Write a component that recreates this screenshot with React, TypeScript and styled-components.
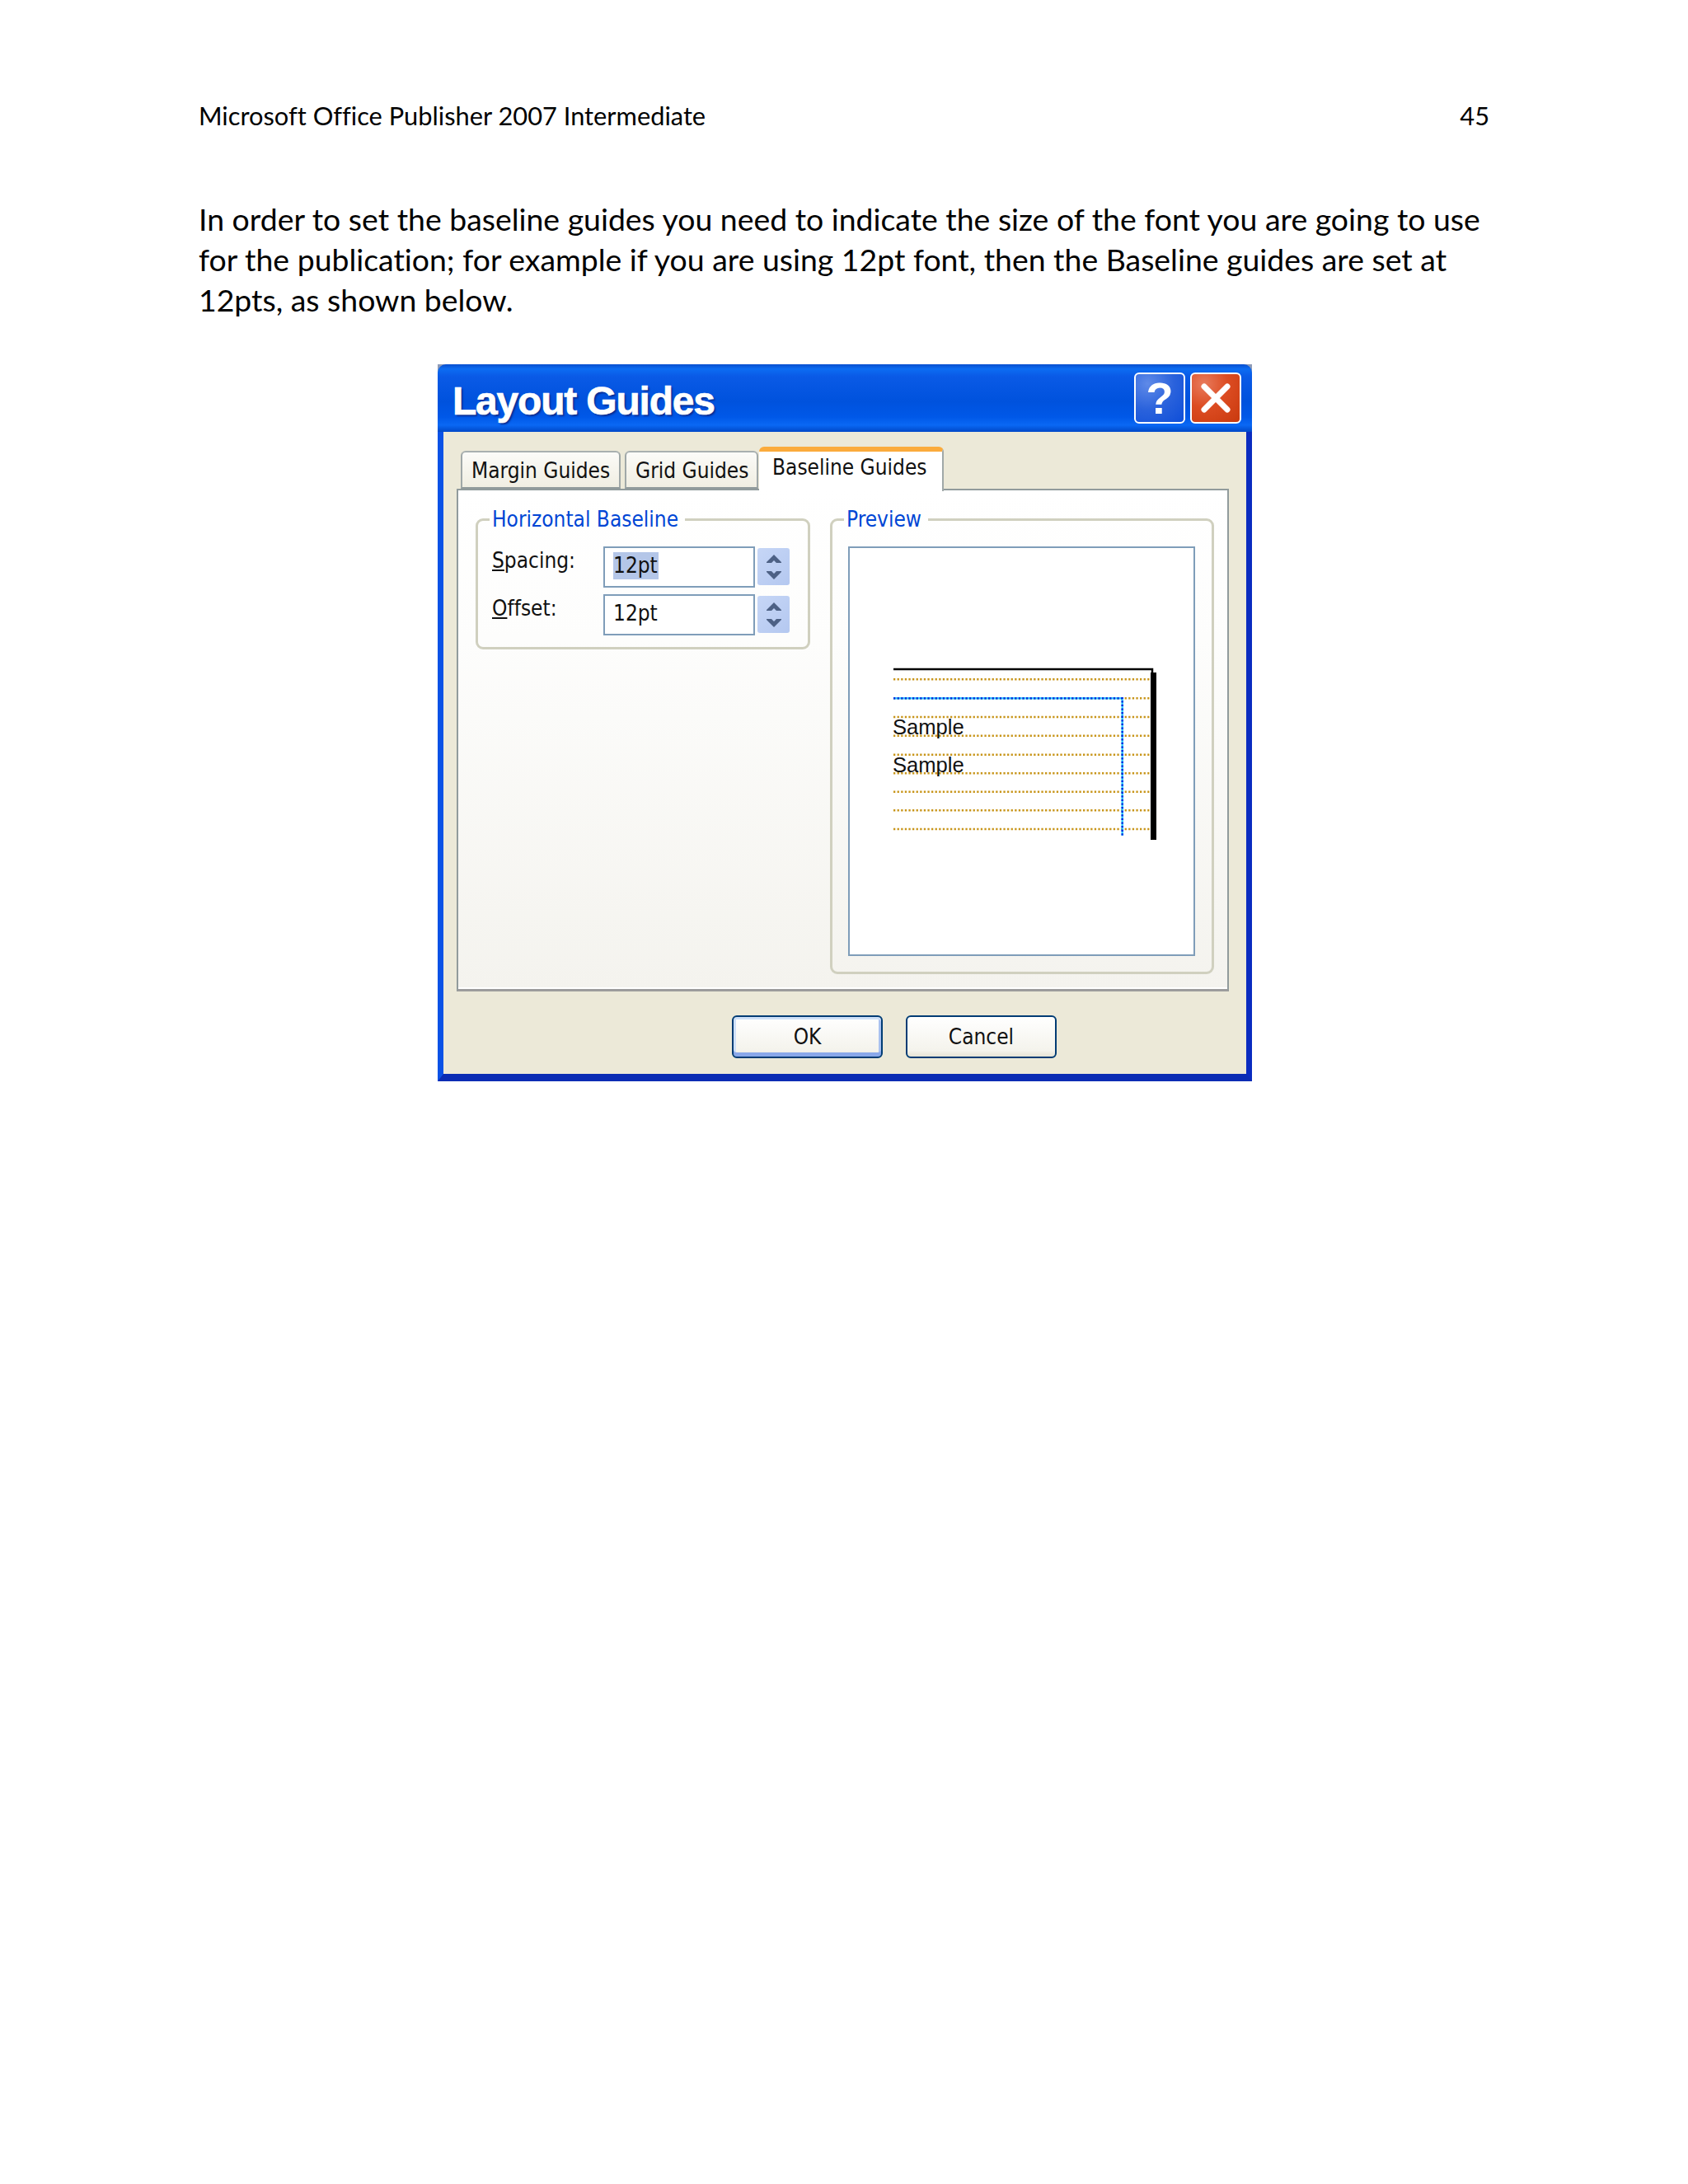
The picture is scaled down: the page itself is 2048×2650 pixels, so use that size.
import * as React from "react";
import styled, { createGlobalStyle } from "styled-components";

const GlobalStyle = createGlobalStyle`
  html, body {
    margin: 0;
    padding: 0;
    background: #fff;
  }
`;

const SPage = styled.div`
  box-sizing: border-box;
  width: 2048px;
  height: 2650px;
  padding: 119px 241px 0 241px;
  font-family: Lato, "Open Sans", sans-serif;
  font-variant-ligatures: none;
  color: #000;
  background: #fff;
`;
const SHeader = styled.div`
  display: flex;
  justify-content: space-between;
  font-size: 30.8px;
  line-height: 44px;
`;
const SParagraph = styled.p`
  margin: 78px 0 0;
  font-size: 37.4px;
  line-height: 49px;
  white-space: nowrap;
`;

const SDialog = styled.div`
  box-sizing: border-box;
  width: 988px;
  height: 870px;
  margin: 54px 0 0 290px;
  display: flex;
  flex-direction: column;
  background: #8e9bb8;
  font-family: "DejaVu Sans Condensed", "DejaVu Sans", sans-serif;
  font-stretch: condensed;
  font-size: 26px;
  color: #111;
`;
const STitleBar = styled.div`
  flex: 0 0 82px;
  box-sizing: border-box;
  display: flex;
  align-items: center;
  padding: 0 13px 0 18px;
  border-radius: 10px 10px 0 0;
  background: linear-gradient(
    180deg,
    #0a4fcf 0%,
    #0c6cf2 7%,
    #0a5ae6 18%,
    #0052dd 55%,
    #0058e8 78%,
    #0a68f4 90%,
    #0048c8 100%
  );
`;
const STitle = styled.div`
  flex: 1;
  padding-top: 6px;
  font-family: "Liberation Sans", sans-serif;
  font-stretch: normal;
  font-weight: 700;
  font-size: 48px;
  letter-spacing: -1.2px;
  color: #fff;
  -webkit-text-stroke: 0.7px #fff;
  text-shadow: 2px 2px 2px #0a2c90;
`;
const SCaptionButton = styled.div<{ $close?: boolean }>`
  box-sizing: border-box;
  width: 62px;
  height: 62px;
  margin-left: 6px;
  display: flex;
  align-items: center;
  justify-content: center;
  border: 2px solid #fff;
  border-radius: 6px;
  font-family: "Liberation Sans", sans-serif;
  font-stretch: normal;
  font-weight: 700;
  font-size: 54px;
  color: #fff;
  background: ${(p) =>
    p.$close
      ? "radial-gradient(circle at 25% 20%, #e87a5c 0%, #dc4c22 45%, #c9390e 100%)"
      : "radial-gradient(circle at 25% 20%, #5f8ae8 0%, #2a62dc 50%, #0e4ed8 100%)"};
`;
const SClient = styled.div`
  flex: 1;
  min-height: 0;
  box-sizing: border-box;
  padding: 18px 21px 0 16px;
  background: #ece9d8;
  border-left: 7px solid #0a52e6;
  border-right: 7px solid #0a2cc0;
  border-bottom: 9px solid #0a2cb4;
`;
const STabs = styled.div`
  display: flex;
  align-items: flex-end;
  height: 51px;
  padding-left: 5px;
`;
const STab = styled.div<{ $active?: boolean; $width: number }>`
  box-sizing: border-box;
  position: relative;
  z-index: ${(p) => (p.$active ? 1 : 0)};
  width: ${(p) => p.$width}px;
  height: ${(p) => (p.$active ? 54 : 46)}px;
  margin-right: ${(p) => (p.$active ? 0 : 5)}px;
  margin-bottom: ${(p) => (p.$active ? -3 : 0)}px;
  margin-left: ${(p) => (p.$active ? -4 : 0)}px;
  padding-left: ${(p) => (p.$active ? 16 : 11)}px;
  border: 2px solid #a0a8a8;
  border-bottom: ${(p) => (p.$active ? "none" : "2px solid #919b9c")};
  border-left: ${(p) => (p.$active ? "none" : "2px solid #a0a8a8")};
  border-top: ${(p) => (p.$active ? "6px solid #fbab3c" : "2px solid #a8b0b0")};
  border-radius: 6px 6px 0 0;
  line-height: ${(p) => (p.$active ? 38 : 45)}px;
  white-space: nowrap;
  background: ${(p) =>
    p.$active ? "#fff" : "linear-gradient(180deg, #fbfbf8 0%, #f0eee2 100%)"};
`;
const SPanel = styled.div`
  box-sizing: border-box;
  display: grid;
  grid-template-columns: 406px 466px;
  column-gap: 24px;
  align-items: start;
  height: 610px;
  padding: 20px 16px 0 21px;
  border: 2px solid #919b9c;
  border-bottom: 3px solid #9c9c9c;
  background: linear-gradient(180deg, #ffffff 0%, #fdfdfc 30%, #f4f3ee 100%);
  box-shadow: inset 0 -2px 0 #fff;
`;
const SGroup = styled.fieldset`
  box-sizing: border-box;
  min-width: 0;
  margin: 0;
  padding: 18px 0 14px 17px;
  border: 3px solid #d0d0bf;
  border-radius: 9px;
`;
const SLegend = styled.legend`
  margin-left: -3px;
  padding: 0 8px 0 3px;
  color: #0046d5;
  line-height: 30px;
`;
const SFieldRow = styled.div`
  display: flex;
  align-items: flex-start;
  & + & {
    margin-top: 8px;
  }
`;
const SLabel = styled.label`
  width: 135px;
  line-height: 34px;
`;
const SInput = styled.div`
  box-sizing: border-box;
  width: 184px;
  height: 50px;
  padding: 5px 0 0 10px;
  border: 2px solid #7f9db9;
  background: #fff;
  line-height: 33px;
`;
const SSelected = styled.span<{ $on?: boolean }>`
  display: inline-block;
  padding-right: 1px;
  background: ${(p) => (p.$on ? "#b4c6e8" : "transparent")};
`;
const SSpin = styled.div`
  width: 39px;
  height: 45px;
  margin: 2px 0 0 3px;
  display: flex;
  align-items: center;
  justify-content: center;
  border-radius: 3px;
  background: linear-gradient(135deg, #c6d6f6 0%, #b4c8f0 100%);
`;
const SPreviewBox = styled.div`
  box-sizing: border-box;
  width: 421px;
  height: 497px;
  margin: 0 0 5px 2px;
  border: 2px solid #7f9db9;
  background: #fff;
`;
const SFooter = styled.div`
  display: flex;
  gap: 28px;
  margin-top: 29px;
  padding-left: 334px;
`;
const SButton = styled.div<{ $default?: boolean }>`
  box-sizing: border-box;
  width: 183px;
  height: 52px;
  display: flex;
  align-items: center;
  justify-content: center;
  border: 2px solid #003c74;
  border-radius: 6px;
  background: linear-gradient(180deg, #fff 0%, #f4f3ec 85%, #e6e2d4 100%);
  box-shadow: ${(p) =>
    p.$default ? "inset 0 3px 0 #cee0f8, inset 0 -5px 0 #8aa8ea, inset 3px 0 0 #cfe0f8, inset -3px 0 0 #aac2f0" : "none"};
`;

const SpinArrows = () => (
  <svg width="20" height="36" viewBox="0 0 20 36">
    <path d="M1 12 L10 3 L19 12 L19 13 L13 13 L10 10 L7 13 L1 13 Z" fill="#4d6185" />
    <path d="M1 24 L10 33 L19 24 L19 23 L13 23 L10 26 L7 23 L1 23 Z" fill="#4d6185" />
  </svg>
);

const baselines = [159.3, 182.3, 205, 227.7, 250.7, 273.3, 295.7, 318.3, 341];

const PreviewDrawing = () => (
  <svg width="417" height="493" viewBox="0 0 417 493">
    {baselines.map((y) => (
      <line
        key={y}
        x1="53"
        x2="366"
        y1={y}
        y2={y}
        stroke="#c8951a"
        strokeWidth="2.5"
        strokeDasharray="2.3 2.3"
      />
    ))}
    <path d="M53 147 H367 V152" stroke="#000" strokeWidth="2.5" fill="none" />
    <rect x="365" y="151" width="7" height="203" fill="#000" />
    <path d="M53 182.3 H330.7 V349" stroke="#39d0ff" strokeWidth="2.5" fill="none" />
    <path
      d="M53 182.3 H330.7 V349"
      stroke="#0030e0"
      strokeWidth="2.5"
      fill="none"
      strokeDasharray="2.3 2.3"
    />
    <text x="52" y="225.7" fontFamily="Liberation Sans" fontSize="25.6" fill="#111">
      Sample
    </text>
    <text x="52" y="271.7" fontFamily="Liberation Sans" fontSize="25.6" fill="#111">
      Sample
    </text>
  </svg>
);

const App = () => (
  <SPage>
    <GlobalStyle />
    <SHeader>
      <span>Microsoft Office Publisher 2007 Intermediate</span>
      <span>45</span>
    </SHeader>
    <SParagraph>
      In order to set the baseline guides you need to indicate the size of the font you are going to use
      <br />
      for the publication; for example if you are using 12pt font, then the Baseline guides are set at
      <br />
      12pts, as shown below.
    </SParagraph>
    <SDialog>
      <STitleBar>
        <STitle>Layout Guides</STitle>
        <SCaptionButton>?</SCaptionButton>
        <SCaptionButton $close>
          <svg width="40" height="40" viewBox="0 0 40 40">
            <path d="M6 6 L34 34 M34 6 L6 34" stroke="#fff" strokeWidth="7" strokeLinecap="round" />
          </svg>
        </SCaptionButton>
      </STitleBar>
      <SClient>
        <STabs>
          <STab $width={194}>Margin Guides</STab>
          <STab $width={162}>Grid Guides</STab>
          <STab $active $width={224}>Baseline Guides</STab>
        </STabs>
        <SPanel>
          <SGroup>
            <SLegend>Horizontal Baseline</SLegend>
            <SFieldRow>
              <SLabel><u>S</u>pacing:</SLabel>
              <SInput><SSelected $on>12pt</SSelected></SInput>
              <SSpin><SpinArrows /></SSpin>
            </SFieldRow>
            <SFieldRow>
              <SLabel><u>O</u>ffset:</SLabel>
              <SInput><SSelected>12pt</SSelected></SInput>
              <SSpin><SpinArrows /></SSpin>
            </SFieldRow>
          </SGroup>
          <SGroup>
            <SLegend>Preview</SLegend>
            <SPreviewBox><PreviewDrawing /></SPreviewBox>
          </SGroup>
        </SPanel>
        <SFooter>
          <SButton $default>OK</SButton>
          <SButton>Cancel</SButton>
        </SFooter>
      </SClient>
    </SDialog>
  </SPage>
);

export default App;
